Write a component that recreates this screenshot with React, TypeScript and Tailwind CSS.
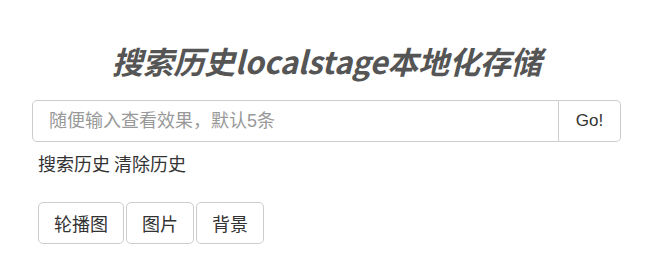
const font = { fontFamily: '"Noto Sans CJK SC", "Noto Sans", sans-serif' };
const arialCjk = { fontFamily: '"Liberation Sans", "Noto Sans CJK SC", sans-serif' };

export default function App() {
  return (
    <div className="w-[661px] h-[255px] bg-white" style={font}>
      <div className="ml-[32px] w-[589px] pt-[40px]">
        <h1 className="h-[40px] flex items-center justify-center text-[31px] font-bold italic text-[#555555] leading-none tracking-[-0.2px]">
          搜索历史localstage本地化存储
        </h1>

        <div className="mt-5 flex h-[42px]">
          <input
            type="text"
            placeholder="随便输入查看效果，默认5条"
            style={arialCjk}
            className="flex-1 min-w-0 h-full border border-[#cccccc] rounded-l-[5px] px-4 text-[18px] text-[#555555] placeholder:text-[#999999] outline-none"
          />
          <button
            style={arialCjk}
            className="w-[62px] h-full border border-l-0 border-[#cccccc] rounded-r-[5px] bg-white text-[17px] text-[#333333]"
          >
            Go!
          </button>
        </div>

        <div className="mt-[9px] ml-[6px] text-[18px] leading-[24px] text-[#333333]">
          <span>搜索历史</span> <span>清除历史</span>
        </div>

        <div className="mt-[27px] ml-[6px] flex gap-[2px]">
          {['轮播图', '图片', '背景'].map((t) => (
            <button
              key={t}
              className="h-[42px] px-[15px] border border-[#cccccc] rounded-[5px] bg-white text-[18px] text-[#333333]"
            >
              {t}
            </button>
          ))}
        </div>
      </div>
    </div>
  );
}
